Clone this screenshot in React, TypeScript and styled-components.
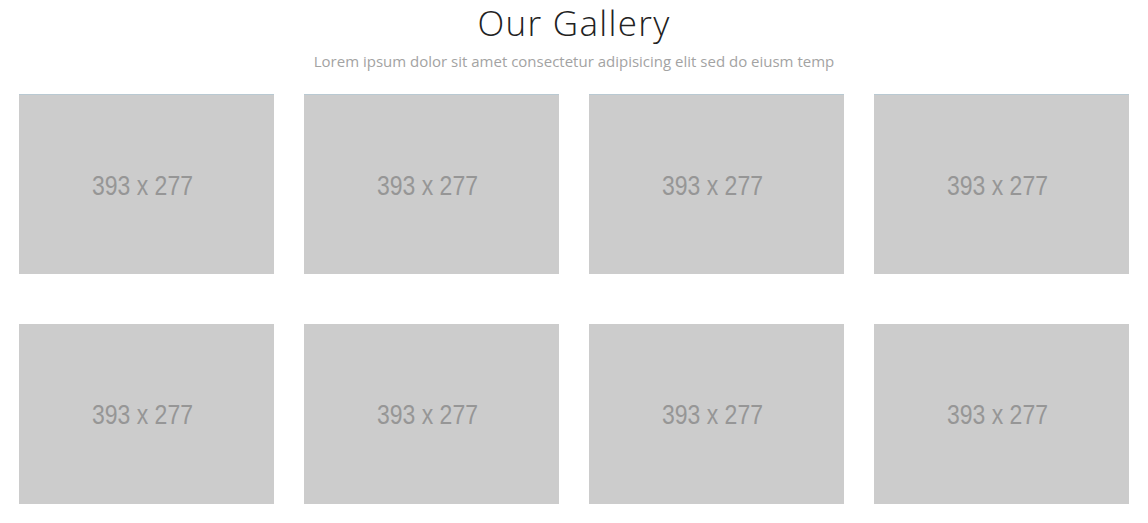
import React from "react";
import styled, { createGlobalStyle } from "styled-components";

const GlobalStyle = createGlobalStyle`
  body {
    margin: 0;
    background: #fff;
    font-family: "Open Sans", "Liberation Sans", sans-serif;
  }
`;

const components = {
  Wrapper: styled.section`
    padding: 0 19px;
  `,
  Heading: styled.div`
    text-align: center;
  `,
  Title: styled.h2`
    margin: 0;
    padding-top: 2px;
    font-family: "Open Sans", "Liberation Sans", sans-serif;
    font-weight: 300;
    font-size: 35px;
    letter-spacing: 1.3px;
    line-height: 42px;
    color: #222;
  `,
  Subtitle: styled.p`
    margin: 6px 0 0;
    font-size: 15px;
    line-height: 22px;
    color: #a3a3a3;
  `,
  Grid: styled.div`
    display: grid;
    grid-template-columns: repeat(4, 255px);
    column-gap: 30px;
    row-gap: 50px;
    margin-top: 22px;
  `,
  Placeholder: styled.div<{ $edge?: boolean }>`
    height: 180px;
    background: #cccccc;
    border-top: ${p => (p.$edge ? "1px solid #b9c9d2" : "none")};
    box-sizing: border-box;
    display: flex;
    align-items: center;
    justify-content: center;
    overflow: hidden;
  `,
  Label: styled.span`
    font-family: "Liberation Sans", Arial, sans-serif;
    font-size: 28px;
    color: #969696;
    transform: scaleX(0.82);
    margin: 2px 0 0 -8px;
    white-space: nowrap;
  `
};

const items = Array.from({ length: 8 }, (_, i) => ({ id: i, w: 393, h: 277 }));

export default function App() {
  return (
    <>
      <GlobalStyle />
      <components.Wrapper>
        <components.Heading>
          <components.Title>Our Gallery</components.Title>
          <components.Subtitle>
            Lorem ipsum dolor sit amet consectetur adipisicing elit sed do eiusm temp
          </components.Subtitle>
        </components.Heading>
        <components.Grid>
          {items.map(item => (
            <components.Placeholder key={item.id} $edge={item.id < 4}>
              <components.Label>
                {item.w} x {item.h}
              </components.Label>
            </components.Placeholder>
          ))}
        </components.Grid>
      </components.Wrapper>
    </>
  );
}
